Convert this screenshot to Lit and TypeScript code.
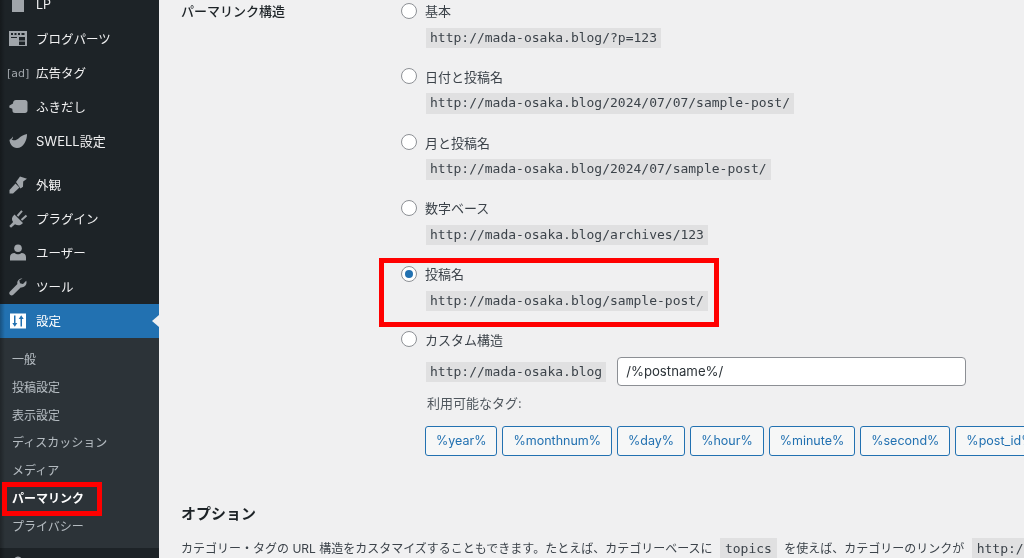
import { LitElement, html, css, svg } from "lit";
import { customElement } from "lit/decorators.js";

const icons: Record<string, unknown> = {
  lp: svg`<path d="M4 0h9l3 3v14H4z"/>`,
  parts: svg`<path fill-rule="evenodd" d="M1 2h18v15H1zM3 4v2h2V4zM6.500 4v2h2V4zM10 4v2h2V4zM13.500 4v2h3V4zM11 8v3.500h6V8zM11 12.500V16h6v-3.500zM3 8v1h6V8z"/>`,
  bubble: svg`<path d="M5 6.500c0-2 1-3.500 3-3.500h9c1.500 0 2.500 1 2.500 2.500v8c0 1.500-1 2.500-2.500 2.500H7c-1.500 0-2.500-1-2.500-2l-.2-2.200L1.200 10.500 1.500 8.500z"/>`,
  swell: svg`<path d="M1.500 9c1-.5 2-.5 3 0 2 .8 4 .2 6-1.500C12.500 5.500 15.500 3.500 19 3c.2 6-3.500 14-10 14-4.500 0-7.200-4-7.500-8z"/><path d="M1.500 8.500C3 8 4 7 5 5.500 5 7 4.500 8.300 3.500 9z"/>`,
  brush: svg`<path d="M8 7 12 1.500l7 2.200-3.800 2.800-.2 5.200-2.500 1.800z"/><path d="M7.500 8.500l4 4L5 18.500H1.500V15z"/>`,
  plug: svg`<path d="M6.500 5.500 15 14c-2.500 2.800-5.500 2.800-8 1.200L3 18.800 1.300 17l3.800-4C3.300 10.500 3.500 8 6.500 5.500z"/><path d="M9.500 7 14 1.800M13.500 11l5-4.500" fill="none" stroke="currentColor" stroke-width="2"/>`,
  user: svg`<circle cx="10" cy="5.300" r="3.800"/><path d="M2 17.500v-3.500c0-2.500 2-4 4.500-4 1 .8 2.200 1.300 3.500 1.300s2.500-.5 3.500-1.300c2.500 0 4.500 1.500 4.500 4v3.500z"/>`,
  wrench: svg`<path d="M14 1.500c-3 0-5.300 2.500-4.600 5.500L2 14.500c-1 1-1 2.300 0 3.300s2.300 1 3.300 0l7.400-7.400c3 .5 5.800-1.800 5.800-4.800 0-.7-.1-1.200-.3-1.800l-3.200 3.100-3-.7-.7-3L14.500 1.500z"/>`,
  settings: svg`<path fill-rule="evenodd" d="M2 2.500h16v15H2zM6 4.500v7.500H4.300L6.800 15.800 9.300 12H7.500V4.500zM12.500 15.500V8h-1.800L13.200 4.200 15.700 8H14v7.500z"/>`,
};

const ic = (n: string) => html`<svg class="ic" viewBox="0 0 20 20" fill="currentColor">${icons[n]}</svg>`;

const MENU1 = [
  ["LP", "lp"], ["ブログパーツ", "parts"], ["広告タグ", "ad"], ["ふきだし", "bubble"], ["SWELL設定", "swell"],
];
const MENU2 = [["外観", "brush"], ["プラグイン", "plug"], ["ユーザー", "user"], ["ツール", "wrench"]];
const SUB = ["一般", "投稿設定", "表示設定", "ディスカッション", "メディア", "パーマリンク", "プライバシー"];
const OPTS = [
  ["基本", "http://mada-osaka.blog/?p=123"],
  ["日付と投稿名", "http://mada-osaka.blog/2024/07/07/sample-post/"],
  ["月と投稿名", "http://mada-osaka.blog/2024/07/sample-post/"],
  ["数字ベース", "http://mada-osaka.blog/archives/123"],
  ["投稿名", "http://mada-osaka.blog/sample-post/"],
];
const TAGS = ["%year%", "%monthnum%", "%day%", "%hour%", "%minute%", "%second%", "%post_id%"];

@customElement("app-root")
export class AppRoot extends LitElement {
  static styles = css`
    :host { display: block; width: 1024px; height: 558px; overflow: hidden; background: #f0f0f1; position: relative;
      font-family: Inter, "Noto Sans CJK JP", sans-serif; font-size: 13px; color: #3c434a; }
    .page { display: flex; height: 558px; overflow: hidden; filter: blur(0.45px); }
    .side { width: 159px; flex: none; background: #1d2327; color: #f0f0f1; margin-top: -12px; height: 570px; overflow: hidden; position: relative; }
    .side::after { content: ""; position: absolute; inset: 0 auto 0 0; width: 5px; background: linear-gradient(90deg, rgba(0,0,0,.28), rgba(0,0,0,0)); }
    .item { height: 34px; display: flex; align-items: center; gap: 8px; padding-left: 8px; font-size: 12.500px; }
    .item span.t { margin-top: -2px; }
    .item span.wide { font-size: 13px; }
    .ic { width: 20px; height: 20px; color: #a0a5aa; flex: none; }
    .adic { width: 20px; flex: none; color: #a0a5aa; font: 11px "DejaVu Sans", sans-serif; margin-left: -1px; margin-right: 1px; white-space: nowrap; }
    .sep { height: 10px; }
    .cur { background: #2271b1; color: #fff; position: relative; }
    .cur .ic { color: #fff; }
    .cur::after { content: ""; position: absolute; right: 0; top: 11px; border: 6px solid transparent; border-right: 7px solid #f0f0f1; border-left: 0; }
    .sub { background: #2c3338; padding: 8px 0 6px; height: 210px; box-sizing: border-box; }
    .sub div { height: 27.800px; line-height: 28px; padding-left: 12px; font-size: 12px; color: rgba(240,246,252,.7); }
    .sub .on { color: #fff; font-weight: 700; }
    .main { flex: 1; min-width: 0; padding-left: 22px; overflow: hidden; }
    .row { display: flex; height: 500.500px; }
    .th { width: 219px; flex: none; font-weight: 500; color: #1d2327; padding-top: 1px; line-height: 20px; }
    .td { flex: 1; min-width: 0; }
    .opt { height: 65.750px; }
    .lab { display: flex; align-items: center; height: 21px; gap: 8.500px; padding-left: .5px; }
    .radio { width: 16px; height: 16px; box-sizing: border-box; border: 1px solid #8c8f94; border-radius: 50%; background: #fff; flex: none; display: flex; align-items: center; justify-content: center; }
    .radio.on::after { content: ""; width: 8px; height: 8px; border-radius: 50%; background: #2271b1; }
    code { font: 13px/20.500px "DejaVu Sans Mono", monospace; background: #e0e0e1; padding: 0 4px; display: inline-block; white-space: nowrap; color: #3c434a; }
    .url { margin: 6.500px 0 0 26px; display: block; }
    .url code { vertical-align: top; }
    .cust { display: flex; align-items: center; margin: 7.500px 0 0 26px; gap: 11px; }
    .input { width: 349px; height: 29px; box-sizing: border-box; border: 1px solid #8c8f94; border-radius: 4px; background: #fff; padding-left: 8px; font: 13.200px/27px Inter, sans-serif; color: #2c3338; flex: none; }
    .avail { margin: 7px 0 0 27px; line-height: 20px; color: #50575e; }
    .tags { display: flex; gap: 5px; margin: 13px 0 0 25px; white-space: nowrap; }
    .tag { height: 30px; box-sizing: border-box; border: 1px solid #2271b1; border-radius: 3px; background: #f6f7f7; color: #2271b1; padding: 0 10px; line-height: 28px; font-size: 12.500px; flex: none; }
    h2 { font-size: 15px; font-weight: 700; color: #1d2327; margin: 0; line-height: 20px; padding-top: 3px; }
    .para { margin-top: 14px; white-space: nowrap; line-height: 21px; font-size: 12px; }
    .para code { vertical-align: top; line-height: 21px; margin: 0 4px; padding: 0 5px; }
    .box { position: absolute; border: 5px solid #ff0000; box-sizing: border-box; pointer-events: none; }
    .b1 { left: 379px; top: 258px; width: 340px; height: 69px; }
    .b2 { left: 2px; top: 482px; width: 100px; height: 34px; }
  `;

  render() {
    return html`
      <div class="page">
        <nav class="side">
          ${MENU1.map(([t, i]) => html`<div class="item">${i === "ad" ? html`<span class="adic">[ad]</span>` : ic(i)}<span class="t ${i === "swell" ? "wide" : ""}">${t}</span></div>`)}
          <div class="sep"></div>
          ${MENU2.map(([t, i]) => html`<div class="item">${ic(i)}<span class="t">${t}</span></div>`)}
          <div class="item cur">${ic("settings")}<span class="t">設定</span></div>
          <div class="sub">${SUB.map((s) => html`<div class=${s === "パーマリンク" ? "on" : ""}>${s}</div>`)}</div>
          <div class="item">${ic("user")}</div>
        </nav>
        <main class="main">
          <div class="row">
            <div class="th">パーマリンク構造</div>
            <div class="td">
              ${OPTS.map(([l, u], i) => html`<div class="opt">
                <div class="lab"><span class="radio ${i === 4 ? "on" : ""}"></span><span>${l}</span></div>
                <div class="url"><code>${u}</code></div>
              </div>`)}
              <div class="lab"><span class="radio"></span><span>カスタム構造</span></div>
              <div class="cust"><code>http://mada-osaka.blog</code><div class="input">/%postname%/</div></div>
              <div class="avail">利用可能なタグ:</div>
              <div class="tags">${TAGS.map((t) => html`<span class="tag">${t}</span>`)}</div>
            </div>
          </div>
          <h2>オプション</h2>
          <div class="para">カテゴリー・タグの URL 構造をカスタマイズすることもできます。たとえば、カテゴリーベースに <code>topics</code> を使えば、カテゴリーのリンクが <code>http://mada-osaka.blog/topics/</code></div>
        </main>
      </div>
      <div class="box b1"></div>
      <div class="box b2"></div>
    `;
  }
}
